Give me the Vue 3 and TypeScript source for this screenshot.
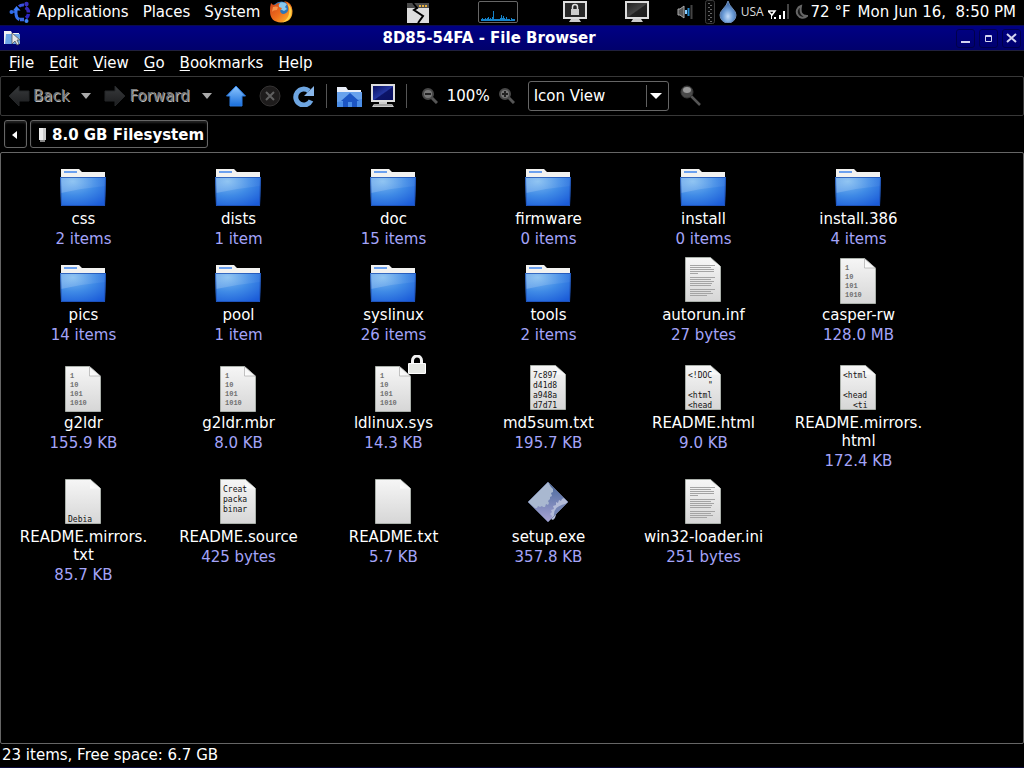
<script setup lang="ts">
import { ref } from 'vue'

type Kind = 'folder' | 'lined' | 'binary' | 'text' | 'exe'

interface Entry {
  name: string[]
  info: string
  kind: Kind
  preview?: string[]
  locked?: boolean
}

const view = ref('Icon View')

const menus = ['File', 'Edit', 'View', 'Go', 'Bookmarks', 'Help']
const bits = ['1', '10', '101', '1010']
const graph = [1, 2, 1, 1, 2, 1, 2, 3, 1, 2, 1, 3, 9, 1, 1, 1, 1, 1, 1, 2, 5, 2, 4, 2, 1, 3, 1, 1, 1, 0, 2, 1, 1, 1]
const ruled = [
  [17, 25], [19, 21], [21, 24], [23, 24], [25, 8],
  [29, 25], [31, 21], [33, 24], [35, 22], [37, 21],
  [41, 25], [43, 21], [45, 23], [47, 17]
]

const entries: Entry[] = [
  { name: ['css'], info: '2 items', kind: 'folder' },
  { name: ['dists'], info: '1 item', kind: 'folder' },
  { name: ['doc'], info: '15 items', kind: 'folder' },
  { name: ['firmware'], info: '0 items', kind: 'folder' },
  { name: ['install'], info: '0 items', kind: 'folder' },
  { name: ['install.386'], info: '4 items', kind: 'folder' },
  { name: ['pics'], info: '14 items', kind: 'folder' },
  { name: ['pool'], info: '1 item', kind: 'folder' },
  { name: ['syslinux'], info: '26 items', kind: 'folder' },
  { name: ['tools'], info: '2 items', kind: 'folder' },
  { name: ['autorun.inf'], info: '27 bytes', kind: 'lined' },
  { name: ['casper-rw'], info: '128.0 MB', kind: 'binary' },
  { name: ['g2ldr'], info: '155.9 KB', kind: 'binary' },
  { name: ['g2ldr.mbr'], info: '8.0 KB', kind: 'binary' },
  { name: ['ldlinux.sys'], info: '14.3 KB', kind: 'binary', locked: true },
  { name: ['md5sum.txt'], info: '195.7 KB', kind: 'text', preview: ['7c897', 'd41d8', 'a948a', 'd7d71'] },
  { name: ['README.html'], info: '9.0 KB', kind: 'text', preview: ['<!DOC', '    "', '<html', '<head'] },
  { name: ['README.mirrors.', 'html'], info: '172.4 KB', kind: 'text', preview: ['<html', '', '<head', '  <ti'] },
  { name: ['README.mirrors.', 'txt'], info: '85.7 KB', kind: 'text', preview: ['', '', '', 'Debia'] },
  { name: ['README.source'], info: '425 bytes', kind: 'text', preview: ['Creat', 'packa', 'binar'] },
  { name: ['README.txt'], info: '5.7 KB', kind: 'text' },
  { name: ['setup.exe'], info: '357.8 KB', kind: 'exe' },
  { name: ['win32-loader.ini'], info: '251 bytes', kind: 'lined' }
]

const indent = (s: string): number => s.length - s.trimStart().length
</script>

<template>
  <div class="desktop">
    <svg class="defs" width="0" height="0" aria-hidden="true">
      <defs>
        <radialGradient id="gFolder" cx="0.28" cy="0.15" r="1">
          <stop offset="0" stop-color="#7cbaf0" /><stop offset="0.5" stop-color="#3f8ae6" /><stop offset="1" stop-color="#1a5bd8" />
        </radialGradient>
        <linearGradient id="gGloss" x1="0" y1="0" x2="1" y2="0">
          <stop offset="0" stop-color="#fff" stop-opacity="0.2" /><stop offset="1" stop-color="#fff" stop-opacity="0.04" />
        </linearGradient>
        <linearGradient id="gPaper" x1="0" y1="0" x2="0" y2="1">
          <stop offset="0" stop-color="#f6f6f6" /><stop offset="1" stop-color="#d6d6d6" />
        </linearGradient>
        <linearGradient id="gFold" x1="0" y1="1" x2="1" y2="0">
          <stop offset="0" stop-color="#fff" /><stop offset="0.5" stop-color="#f4f4f4" /><stop offset="1" stop-color="#999" />
        </linearGradient>
        <linearGradient id="gBlue" x1="0" y1="0" x2="0" y2="1">
          <stop offset="0" stop-color="#8cc6ff" /><stop offset="1" stop-color="#1a6fdc" />
        </linearGradient>
        <linearGradient id="gScreen" x1="0" y1="0" x2="1" y2="1">
          <stop offset="0" stop-color="#0a1060" /><stop offset="0.5" stop-color="#2436a0" /><stop offset="0.55" stop-color="#0c1468" /><stop offset="1" stop-color="#0a1060" />
        </linearGradient>
        <linearGradient id="gDark" x1="0" y1="0" x2="1" y2="1">
          <stop offset="0" stop-color="#222" /><stop offset="0.5" stop-color="#444" /><stop offset="0.55" stop-color="#222" /><stop offset="1" stop-color="#1a1a1a" />
        </linearGradient>
        <linearGradient id="gArrow" x1="0" y1="0" x2="0" y2="1">
          <stop offset="0" stop-color="#383a3c" /><stop offset="1" stop-color="#1c1d1f" />
        </linearGradient>
        <radialGradient id="gDrop" cx="0.5" cy="0.7" r="0.6">
          <stop offset="0" stop-color="#c4dcf8" /><stop offset="0.5" stop-color="#6f9fd8" /><stop offset="1" stop-color="#3c66a4" />
        </radialGradient>
        <linearGradient id="gFox" x1="0" y1="0" x2="1" y2="1">
          <stop offset="0" stop-color="#c8401a" /><stop offset="0.5" stop-color="#ee6c1c" /><stop offset="1" stop-color="#ffc62c" />
        </linearGradient>
        <linearGradient id="gExe" x1="0" y1="0" x2="0" y2="1">
          <stop offset="0" stop-color="#44669a" /><stop offset="1" stop-color="#a9a4d4" />
        </linearGradient>
      </defs>
    </svg>

    <header class="panel">
      <button class="plain logo" type="button" aria-label="Main menu">
        <svg width="22" height="22" viewBox="0 0 22 22" fill="none">
          <circle cx="2.500" cy="11" r="2" fill="#2f6ce8" />
          <path d="M4 11h3" stroke="#2458c8" stroke-width="2" />
          <path d="M10.500 18.500Q7 17 7 13V9" stroke="#3672ee" stroke-width="3" />
          <path d="M4 9.500L7.500 5l4 4.500z" fill="#3f80ff" />
          <path d="M10 5.500q2-2 5-1.500" stroke="#3a50e0" stroke-width="3" />
          <path d="M16.500 6.500q3 1.500 3 5" stroke="#3428b8" stroke-width="3.500" />
          <path d="M19.500 13q-.5 2.500-2.500 4" stroke="#2c24c0" stroke-width="3.500" />
          <path d="M11 18.500h4" stroke="#3a68e0" stroke-width="3.500" />
          <circle cx="17.500" cy="3" r="2.200" fill="#3830c0" /><circle cx="17.500" cy="20" r="2" fill="#3d84f4" />
        </svg>
      </button>
      <nav class="apps" aria-label="Desktop">
        <button class="plain" type="button">Applications</button>
        <button class="plain" type="button">Places</button>
        <button class="plain" type="button">System</button>
      </nav>
      <button class="plain" type="button" aria-label="Firefox">
        <svg width="24" height="24" viewBox="0 0 24 24">
          <circle cx="12.500" cy="11.500" r="10" fill="#2d75b8" />
          <path d="M10 3q4-2 8 1l-2 3 2 2-3 2-4-2-3-2z" fill="#8ac8ec" />
          <path d="M2 3q1 2 4 2 2-2 5-2-2 2-1 4l3 1-2 3 1 2q2 2 5 0 3-2 2-6-1-4-4-6 8 1 8.500 10 0 11-11.500 11.500Q1 22 1 11q0-5 1-8z" fill="url(#gFox)" />
          <path d="M18 3q5 4 4.500 9-.5 9-9 10.500 6-4 6.500-9 1-6-2-10.500z" fill="#ffd24a" />
          <path d="M4 7q3-1 5 0l-1 3q-4 0-5 2z" fill="#f6934a" />
        </svg>
      </button>

      <div class="launchers">
        <button class="plain" type="button" aria-label="Force quit">
          <svg width="22" height="21" viewBox="0 0 22 21"><path d="M0 1h22v20H0z" fill="#ddd" /><path d="M0 1h22v5H0z" fill="#4c4c4c" /><path d="M12 3h2v2h-2zm3 0h2v2h-2zm3 0h2v2h-2z" fill="#e8b040" /><path d="M6 1l4 5-3 2 9 6-5 7" fill="none" stroke="#000" stroke-width="2" /></svg>
        </button>
        <div class="graph" role="img" aria-label="Processor load">
          <svg width="36" height="18" viewBox="0 0 36 18"><rect v-for="(h, i) in graph" :key="i" :x="i + 1" :y="17 - h" width="1" :height="h + 1" fill="#1583c9" /></svg>
        </div>
        <button class="plain" type="button" aria-label="Lock screen">
          <svg width="24" height="22" viewBox="0 0 24 22"><path d="M0 0h24v18H0z" fill="#ddd" /><path d="M2 2h20v14H2z" fill="#262626" /><path d="M8 18h8l2 3H6z" fill="#ccc" /><path d="M9.500 8V6a2.500 2.500 0 0 1 5 0v2" fill="none" stroke="#ddd" stroke-width="1.500" /><path d="M8 8h8v6H8z" fill="#ccc" /></svg>
        </button>
        <button class="plain" type="button" aria-label="Show desktop">
          <svg width="24" height="22" viewBox="0 0 24 22"><path d="M0 0h24v18H0z" fill="#ddd" /><path d="M2 2h20v14H2z" fill="url(#gDark)" /><path d="M8 18h8l2 3H6z" fill="#ccc" /></svg>
        </button>
      </div>

      <div class="tray">
        <svg width="16" height="16" viewBox="0 0 16 16"><path d="M1 5h2l4-3v12l-4-3H1z" fill="#555" stroke="#aaa" /><path d="M9 6v4" stroke="#8cf" stroke-width="2" /><path d="M11.500 4v8" stroke="#28c" stroke-width="2" /><path d="M14.500 1v14" stroke="#444" stroke-width="2" /></svg>
        <svg class="grip" width="10" height="24" viewBox="0 0 10 24"><rect x="0.500" y="0.500" width="9" height="23" rx="2" fill="#080808" stroke="#3c3c3c" /><path d="M4 3v19" stroke="#666" stroke-width="2" stroke-dasharray="1 3" /><path d="M6 5v17" stroke="#666" stroke-width="2" stroke-dasharray="1 3" /></svg>
        <svg class="drop" width="18" height="22" viewBox="0 0 18 22"><path d="M9 0q1 4 5 8 3 3 3 6a8 8 0 0 1-16 0q0-3 3-6 4-4 5-8z" fill="url(#gDrop)" stroke="#6f8fba" /></svg>
        <span class="layout">USA</span>
        <svg class="signal" width="22" height="18" viewBox="0 0 22 18"><path d="M0 8h7L4 12z" fill="none" stroke="#fff" stroke-width="1.500" /><path d="M3 11h1v5H3zM6 14h2v2H6zM11 12h2v4h-2zM15 8h2v8h-2z" fill="#fff" /><path d="M19 1h2v15h-2z" fill="#444" /></svg>
        <svg class="moon" width="14" height="16" viewBox="0 0 14 16"><path d="M7 2a6 6 0 1 0 6 10q-8 0-6-10z" fill="#181818" stroke="#666" stroke-width="2" /></svg>
        <span class="temp">72 °F</span>
        <time class="clock">Mon Jun 16,&nbsp; 8:50 PM</time>
      </div>
    </header>

    <main class="window">
      <div class="titlebar">
        <svg width="18" height="16" viewBox="0 0 18 16"><path d="M0 1h7l1 2h7v11H0z" fill="#f2f2f2" /><path d="M2 4h14v10H1z" fill="#6ca5e6" /><path d="M8 3v11l3-3 2 4 2-1-2-4h3z" fill="#e6e6e6" stroke="#555" stroke-width="0.800" /></svg>
        <h1>8D85-54FA - File Browser</h1>
        <div class="controls">
          <button type="button" aria-label="Minimize"><svg width="17" height="17"><path d="M4 11h9v2H4z" fill="#d4d4f0" /></svg></button>
          <button type="button" aria-label="Maximize"><svg width="17" height="17"><path d="M5.500 5.500h6v6h-6zM5 6.500h7" fill="none" stroke="#d4d4f0" /></svg></button>
          <button type="button" aria-label="Close"><svg width="17" height="17"><path d="M4 4l9 8M13 4l-9 8" stroke="#d4d4f0" stroke-width="2" /></svg></button>
        </div>
      </div>

      <nav class="menubar" aria-label="Menu bar">
        <button v-for="m in menus" :key="m" class="plain" type="button"><u>{{ m[0] }}</u>{{ m.slice(1) }}</button>
      </nav>

      <div class="toolbar" role="toolbar" aria-label="Navigation">
        <button class="plain nav" type="button" disabled>
          <svg width="22" height="22" viewBox="0 0 22 22"><path d="M1 11L11 1v5h10v10H11v5z" fill="url(#gArrow)" stroke="#242628" /></svg>Back
        </button>
        <button class="plain caret" type="button" aria-label="Back history"><svg width="10" height="6"><path d="M0 0h10L5 6z" fill="#aaa" /></svg></button>
        <button class="plain nav" type="button" disabled>
          <svg width="22" height="22" viewBox="0 0 22 22"><path d="M21 11L11 1v5H1v10h10v5z" fill="url(#gArrow)" stroke="#242628" /></svg>Forward
        </button>
        <button class="plain caret" type="button" aria-label="Forward history"><svg width="10" height="6"><path d="M0 0h10L5 6z" fill="#aaa" /></svg></button>
        <div class="actions">
          <button class="plain" type="button" aria-label="Up"><svg width="22" height="22" viewBox="0 0 22 22"><path d="M11 1l9.500 10H17v10H5V11H1.500z" fill="url(#gBlue)" stroke="#2a7ae0" /></svg></button>
          <button class="plain" type="button" aria-label="Stop" disabled><svg width="22" height="22" viewBox="0 0 22 22"><circle cx="11" cy="11" r="10" fill="#1e1c1c" stroke="#363434" /><path d="M7 7l8 8M15 7l-8 8" stroke="#606060" stroke-width="2" /></svg></button>
          <button class="plain" type="button" aria-label="Reload"><svg width="22" height="22" viewBox="0 0 22 22"><path d="M18 15.500A8 8 0 1 1 16 6" fill="none" stroke="#6ea6e2" stroke-width="5" /><path d="M21 1v10H11z" fill="#88b6ea" /></svg></button>
        </div>
        <span class="rule"></span>
        <div class="places">
          <button class="plain" type="button" aria-label="Home"><svg width="26" height="24" viewBox="0 0 26 24"><path d="M1 3h9l2 3h13v16H1z" fill="#e9eef8" /><path d="M1 8h25v15H1z" fill="#4b8ee8" /><path d="M1 8h25v7L1 18z" fill="#86b6f2" opacity="0.500" /><path d="M14 9l9 8h-2v6h-5v-5h-4v5H7v-6H5z" fill="#1c55c4" /></svg></button>
          <button class="plain" type="button" aria-label="Computer"><svg width="24" height="24" viewBox="0 0 24 24"><path d="M0 0h24v18H0z" fill="#ddd" /><path d="M2 2h20v14H2z" fill="url(#gScreen)" /><path d="M8 18h8v2h5l2 3H1l2-3h5z" fill="#ccc" /><path d="M3 21h18" stroke="#777" /></svg></button>
        </div>
        <span class="rule"></span>
        <div class="zoom">
          <button class="plain" type="button" aria-label="Zoom out"><svg width="16" height="16" viewBox="0 0 16 16"><path d="M9 9l6 6" stroke="#555" stroke-width="3" /><circle cx="6" cy="6" r="5" fill="#777" stroke="#484848" stroke-width="2" /><path d="M3 6h6" stroke="#222" stroke-width="2" /></svg></button>
          <span>100%</span>
          <button class="plain" type="button" aria-label="Zoom in"><svg width="16" height="16" viewBox="0 0 16 16"><path d="M9 9l6 6" stroke="#555" stroke-width="3" /><circle cx="6" cy="6" r="5" fill="#777" stroke="#484848" stroke-width="2" /><path d="M3 6h6M6 3v6" stroke="#222" stroke-width="2" /></svg></button>
        </div>
        <div class="combo">
          <select v-model="view" aria-label="View as">
            <option>Icon View</option>
            <option>List View</option>
          </select>
          <svg width="12" height="6" aria-hidden="true"><path d="M0 0h12L6 6z" fill="#fff" /></svg>
        </div>
        <button class="plain" type="button" aria-label="Search"><svg width="22" height="22" viewBox="0 0 22 22"><path d="M11 11l9 9" stroke="#555" stroke-width="2.500" /><circle cx="7" cy="7" r="6" fill="#4a4a4a" stroke="#383838" /><ellipse cx="7" cy="5" rx="4" ry="3" fill="#999" /></svg></button>
      </div>

      <div class="location">
        <button class="crumb back" type="button" aria-label="Scroll left"><svg width="5" height="8"><path d="M5 0v8L0 4z" fill="#fff" /></svg></button>
        <button class="crumb" type="button">
          <svg width="9" height="16"><path d="M1 1h7v12H1z" fill="#ccc" /><path d="M1 1h4v12H1z" fill="#eee" /><path d="M2 13h5v2H2z" fill="#888" /></svg>8.0 GB Filesystem
        </button>
      </div>

      <section class="files" aria-label="Folder contents">
        <article v-for="e in entries" :key="e.name.join('')" class="entry">
          <div class="icon" :class="{ locked: e.locked }">
            <svg width="49" height="50" viewBox="0 0 49 50">
              <g v-if="e.kind === 'folder'">
                <path d="M2 18V9h18l3 3h23v6z" fill="#f2f2f0" />
                <path d="M5 11h13v2H5z" fill="#6ba0ee" />
                <path d="M1 17h46l-1 29H2z" fill="url(#gFolder)" />
                <path d="M2 18h44v8Q24 28 2 33z" fill="url(#gGloss)" />
                <path d="M1.500 17.500h45L45.500 45.500h-43z" fill="none" stroke="#1c4cae" stroke-opacity="0.700" />
              </g>
              <g v-else-if="e.kind === 'binary'">
                <path d="M6.500 2.500h24l11 10v35h-35z" fill="url(#gPaper)" stroke="#aab0aa" />
                <path d="M30.500 2.500v9.500h11z" fill="url(#gFold)" stroke="#aaa" stroke-width="0.700" />
                <text v-for="(b, i) in bits" :key="b" class="bits" x="11" :y="14 + i * 9">{{ b }}</text>
              </g>
              <g v-else-if="e.kind === 'exe'">
                <path d="M24 4l20 20-20 20L4 24z" fill="url(#gExe)" />
                <path d="M24 4L4 24l7 6h2l1-2 2 1 2-1 1 1h2l1-3 2 1 1-2-1-2 2-2v-2l2-1-1-3 2-1v-3l-2-2z" fill="#a9b8d0" />
                <path d="M44 24l-4-4-2 1-1 2-2-1-1 3-2-1v3l-3 1 1 3-3 1 1 2-2 2 2 2-1 3 2 1 2-2q2-10 13-16z" fill="#b4bcd8" />
                <path d="M42 26L30 38q-1-10 12-12z" fill="#7484b4" />
                <path d="M24 4l20 20-20 20L4 24z" fill="none" stroke="#6f7ba0" stroke-width="0.700" />
              </g>
              <g v-else>
                <path d="M6.500 1.500h25l10 9v35h-35z" fill="url(#gPaper)" stroke="#aab0aa" />
                <path d="M31 2v8.500h10.500z" fill="url(#gFold)" />
                <g v-if="e.kind === 'lined'">
                  <path v-for="([y, w], i) in ruled" :key="i" :d="`M11 ${y - 8}.5h${w}`" stroke="#a4a4a4" />
                </g>
                <template v-for="(line, i) in e.preview ?? []" :key="i">
                  <text v-if="line" class="preview" :x="9 + indent(line) * 5" :y="14 + i * 10">{{ line.trim() }}</text>
                </template>
              </g>
            </svg>
            <svg v-if="e.locked" class="badge" width="18" height="19" viewBox="0 0 18 19"><path d="M4.500 10V5.500a4 4 0 0 1 9 0V10" fill="none" stroke="#f2f2f2" stroke-width="3" /><path d="M1 9h16v10H1z" fill="#e6e8e4" /><path d="M0.500 8.500h17v10h-17z" fill="none" stroke="#fff" /></svg>
          </div>
          <div class="label">
            <span v-for="part in e.name" :key="part">{{ part }}</span>
            <small>{{ e.info }}</small>
          </div>
        </article>
      </section>

      <footer class="status">23 items, Free space: 6.7 GB</footer>
    </main>
  </div>
</template>

<style>
body {
  background: #000;
}
</style>

<style scoped>
.desktop {
  min-height: 100vh;
  display: flex;
  flex-direction: column;
  background: #000;
  color: #fff;
  font: 15px/18px "DejaVu Sans", sans-serif;
}
.desktop * {
  box-sizing: border-box;
}
.defs {
  position: absolute;
}
svg {
  display: block;
  flex: none;
}
button,
select {
  font: inherit;
  color: inherit;
  margin: 0;
}
.plain {
  border: 0;
  padding: 0;
  background: none;
  white-space: nowrap;
}
.panel {
  height: 25px;
  display: flex;
  align-items: center;
  padding: 0 8px 1px 9px;
  white-space: nowrap;
}
.logo {
  margin-right: 6px;
}
.apps {
  display: flex;
  gap: 14px;
  margin-right: 9px;
}
.launchers {
  display: flex;
  align-items: center;
  gap: 38px;
  margin-left: auto;
}
.graph {
  width: 40px;
  height: 22px;
  border: 1px solid #666;
  border-radius: 2px;
  padding: 1px;
  margin: 0 7px 0 11px;
}
.tray {
  display: flex;
  align-items: center;
  margin-left: 28px;
}
.grip {
  margin-left: 12px;
}
.drop {
  margin: 0 4px;
}
.layout {
  font: 12px/18px "Open Sans", sans-serif;
  color: #ddd;
}
.signal {
  margin: 0 4px;
}
.moon {
  margin-right: 3px;
}
.temp {
  margin-right: 7px;
}
.window {
  flex: 1;
  display: flex;
  flex-direction: column;
  border-bottom: 1px solid #0a0a38;
}
.titlebar {
  height: 26px;
  display: flex;
  align-items: center;
  padding: 0 3px 0 4px;
  background: linear-gradient(#000084, #00006c);
  border-top: 1px solid #0a0a50;
  border-bottom: 1px solid #20203c;
}
.titlebar h1 {
  flex: 1;
  margin: 0;
  text-align: center;
  font-size: 15px;
  line-height: 18px;
}
.controls {
  display: flex;
  gap: 4px;
}
.controls button {
  width: 19px;
  height: 19px;
  padding: 0;
  border: 1px solid #00004c;
  border-radius: 3px;
  background: none;
}
.menubar {
  height: 25px;
  display: flex;
  align-items: center;
  gap: 15px;
  padding: 0 9px 2px;
}
.menubar u {
  text-underline-offset: 2px;
}
.toolbar {
  height: 40px;
  display: flex;
  align-items: center;
  padding: 0 7px;
  border: 1px solid #383838;
  border-radius: 2px;
}
.nav {
  display: flex;
  align-items: center;
  gap: 3px;
  color: #777;
  text-shadow: 1px 1px 0 #bbb;
}
.caret {
  margin: 0 13px 0 12px;
}
.actions {
  display: flex;
  gap: 12px;
}
.rule {
  width: 1px;
  height: 24px;
  background: #555;
  margin: 0 9px 0 11px;
}
.places {
  display: flex;
  gap: 9px;
}
.zoom {
  display: flex;
  align-items: center;
  gap: 9px;
  margin: 0 13px 0 6px;
}
.combo {
  position: relative;
  width: 141px;
  height: 30px;
  margin-right: 11px;
}
.combo select {
  appearance: none;
  width: 100%;
  height: 100%;
  padding: 0 28px 0 5px;
  border: 1px solid #666;
  border-radius: 3px;
  background: linear-gradient(#606060, #606060) right 21px center / 1px 22px no-repeat #000;
}
.combo svg {
  position: absolute;
  right: 7px;
  top: 12px;
  pointer-events: none;
}
.location {
  height: 36px;
  display: flex;
  align-items: center;
  gap: 3px;
  padding: 0 4px;
}
.crumb {
  height: 28px;
  display: flex;
  align-items: center;
  gap: 5px;
  padding: 1px 3px 0 7px;
  border: 1px solid #666;
  border-radius: 3px;
  background: #000;
  box-shadow: inset 0 2px 2px #222;
  font-weight: bold;
  white-space: nowrap;
}
.back {
  width: 23px;
}
.files {
  flex: 1;
  display: grid;
  grid-template-columns: repeat(auto-fill, 155px);
  align-content: start;
  padding: 0 5px;
  border: 1px solid #666;
  border-radius: 2px;
}
.entry {
  display: grid;
  grid-row: span 2;
  grid-template-rows: subgrid;
  justify-items: center;
}
.icon {
  position: relative;
  align-self: end;
  padding-top: 7px;
}
.icon.locked {
  padding-top: 19px;
}
.badge {
  position: absolute;
  top: 10px;
  right: -8px;
}
.label {
  display: flex;
  flex-direction: column;
  padding-bottom: 1px;
  text-align: center;
  white-space: nowrap;
}
.label small {
  margin-top: 2px;
  font-size: 15px;
  color: #a4a4f8;
}
.preview {
  font: 8px "DejaVu Sans Mono", monospace;
  fill: #111;
}
.bits {
  font: bold 7px "Liberation Mono", monospace;
  fill: #707070;
}
.status {
  height: 23px;
  padding: 2px;
}
</style>
